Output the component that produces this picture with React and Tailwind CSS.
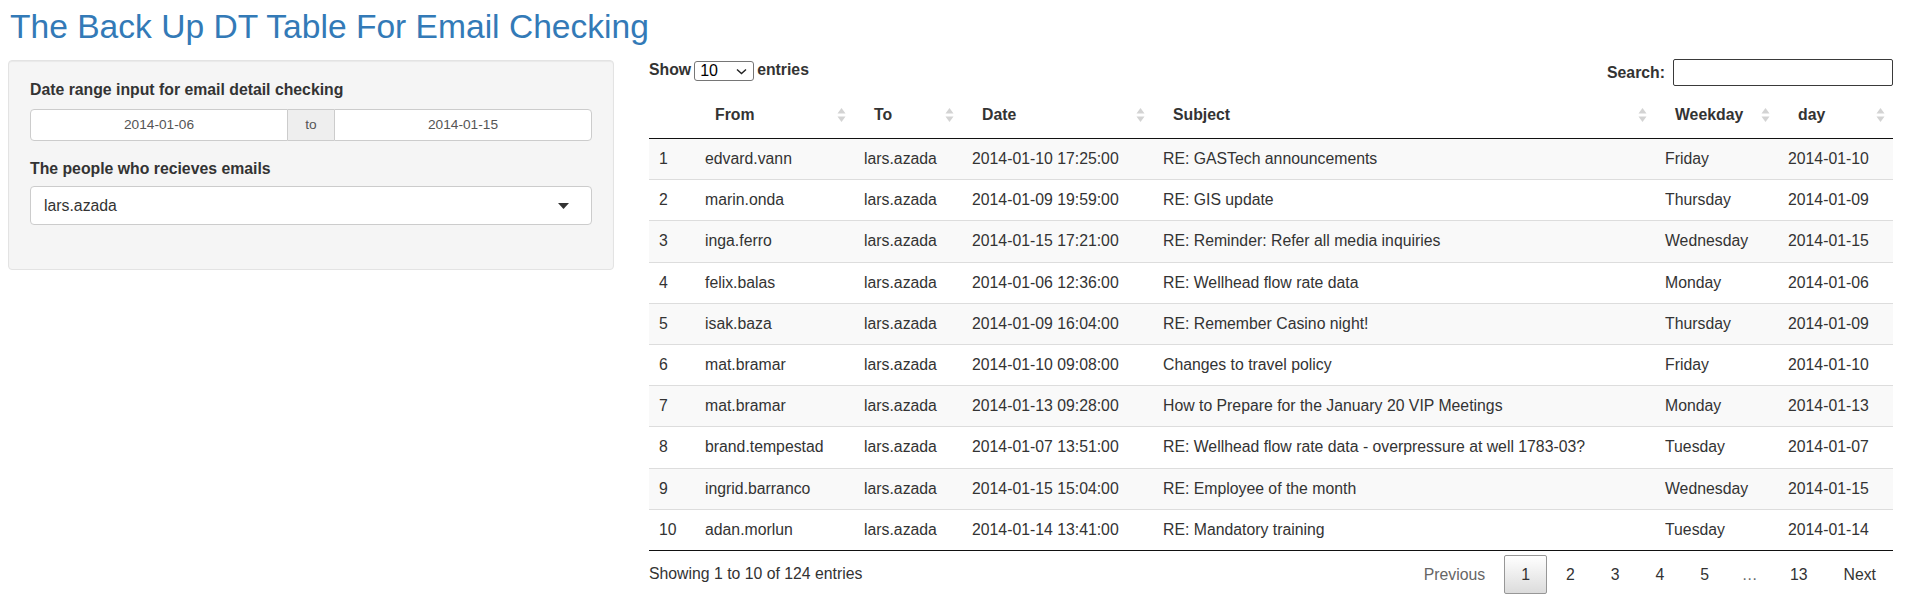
import React from 'react';

const rows = [
  ['1', 'edvard.vann', 'lars.azada', '2014-01-10 17:25:00', 'RE: GASTech announcements', 'Friday', '2014-01-10'],
  ['2', 'marin.onda', 'lars.azada', '2014-01-09 19:59:00', 'RE: GIS update', 'Thursday', '2014-01-09'],
  ['3', 'inga.ferro', 'lars.azada', '2014-01-15 17:21:00', 'RE: Reminder: Refer all media inquiries', 'Wednesday', '2014-01-15'],
  ['4', 'felix.balas', 'lars.azada', '2014-01-06 12:36:00', 'RE: Wellhead flow rate data', 'Monday', '2014-01-06'],
  ['5', 'isak.baza', 'lars.azada', '2014-01-09 16:04:00', 'RE: Remember Casino night!', 'Thursday', '2014-01-09'],
  ['6', 'mat.bramar', 'lars.azada', '2014-01-10 09:08:00', 'Changes to travel policy', 'Friday', '2014-01-10'],
  ['7', 'mat.bramar', 'lars.azada', '2014-01-13 09:28:00', 'How to Prepare for the January 20 VIP Meetings', 'Monday', '2014-01-13'],
  ['8', 'brand.tempestad', 'lars.azada', '2014-01-07 13:51:00', 'RE: Wellhead flow rate data - overpressure at well 1783-03?', 'Tuesday', '2014-01-07'],
  ['9', 'ingrid.barranco', 'lars.azada', '2014-01-15 15:04:00', 'RE: Employee of the month', 'Wednesday', '2014-01-15'],
  ['10', 'adan.morlun', 'lars.azada', '2014-01-14 13:41:00', 'RE: Mandatory training', 'Tuesday', '2014-01-14'],
];

const headers = ['From', 'To', 'Date', 'Subject', 'Weekday', 'day'];

const cols = 'grid grid-cols-[46px_159px_108px_191px_502px_123px_115px]';

function SortIcon() {
  return (
    <svg width="9" height="16" viewBox="0 0 9 16" className="shrink-0">
      <path d="M0.5 6.5 L4.5 1 L8.5 6.5 Z" fill="#d3d3d3" />
      <path d="M0.5 9.5 L4.5 15 L8.5 9.5 Z" fill="#d3d3d3" />
    </svg>
  );
}

export default function App() {
  return (
    <div className="w-full h-[610px] overflow-hidden bg-white text-[#333] font-['Liberation_Sans',Arial,sans-serif] text-[15.8px]">
      {/* Title */}
      <h2 className="pl-[10px] pt-[8px] text-[33.6px] leading-[37px] text-[#337ab7] font-normal">
        The Back Up DT Table For Email Checking
      </h2>

      <div className="flex mt-[14px]">
        {/* Sidebar */}
        <div className="ml-[8px] w-[606px] mt-[1px] shrink-0">
          <div className="bg-[#f5f5f5] border border-[#e3e3e3] rounded-[4px] shadow-[inset_0_1px_1px_rgba(0,0,0,0.05)] px-[21px] pt-[17px] pb-[44px]">
            <div className="font-bold leading-[23px] mb-[8px]">Date range input for email detail checking</div>
            <div className="flex h-[32px] text-[13.7px] text-[#555]">
              <div className="flex-1 flex items-center justify-center bg-white border border-[#ccc] rounded-l-[4px]">2014-01-06</div>
              <div className="w-[46px] flex items-center justify-center bg-[#eee] border-y border-[#ccc]">to</div>
              <div className="flex-1 flex items-center justify-center bg-white border border-[#ccc] rounded-r-[4px]">2014-01-15</div>
            </div>
            <div className="font-bold leading-[23px] mt-[16px] mb-[6px]">The people who recieves emails</div>
            <div className="h-[39px] bg-white border border-[#ccc] rounded-[4px] flex items-center justify-between pl-[13px] pr-[22px]">
              <span className="text-[#333]">lars.azada</span>
              <svg width="11" height="6" viewBox="0 0 11 6">
                <path d="M0 0 L11 0 L5.5 6 Z" fill="#333" />
              </svg>
            </div>
          </div>
        </div>

        {/* Main */}
        <div className="ml-[35px] w-[1244px] shrink-0">
          <div className="flex justify-between items-start h-[27px]">
            <div className="flex items-center leading-[22px] font-bold">
              <span>Show</span>
              <div className="mx-[3px] mt-[2px] w-[60px] h-[20px] border border-[#767676] rounded-[3px] bg-white flex items-center justify-between pl-[5px] pr-[6px] font-normal text-[16px] leading-[18px] text-black">
                <span>10</span>
                <svg width="11" height="7" viewBox="0 0 11 7">
                  <path d="M1 1.5 L5.5 5.5 L10 1.5" stroke="#222" strokeWidth="1.4" fill="none" />
                </svg>
              </div>
              <span>entries</span>
            </div>
            <div className="flex items-center h-[27px] font-bold">
              <span className="mr-[8px] mt-[1px]">Search:</span>
              <div className="w-[220px] h-[27px] border-[1.5px] border-[#3a3a3a] rounded-[2px] bg-white" />
            </div>
          </div>

          {/* Table */}
          <div className="mt-[10px]">
            <div className={`${cols} border-b border-[#111] font-bold`}>
              <div />
              {headers.map((h) => (
                <div key={h} className="flex items-center justify-between pl-[20px] pr-[8px] pt-[8px] pb-[12px] leading-[22px]">
                  <span>{h}</span>
                  <SortIcon />
                </div>
              ))}
            </div>
            <div className="border-b border-[#111]">
              {rows.map((r, i) => (
                <div
                  key={i}
                  className={`${cols} ${i % 2 === 0 ? 'bg-[#f9f9f9]' : 'bg-white'} ${i > 0 ? 'border-t border-[#ddd]' : ''}`}
                >
                  {r.map((c, j) => (
                    <div key={j} className="px-[10px] py-[9px] leading-[22.2px] whitespace-nowrap">
                      {c}
                    </div>
                  ))}
                </div>
              ))}
            </div>

            {/* Footer */}
            <div className="flex justify-between items-center mt-[4px] h-[39px]">
              <div className="leading-[22px] -mt-[2px]">Showing 1 to 10 of 124 entries</div>
              <div className="flex items-center">
                <span className="px-[16px] py-[8px] leading-[22px] border border-transparent text-[#666]">Previous</span>
                <span className="ml-[2px] px-[16px] py-[7px] leading-[23px] border border-[#979797] rounded-[2px] bg-gradient-to-b from-white to-[#dcdcdc]">1</span>
                <span className="ml-[2px] px-[16px] py-[8px] leading-[22px] border border-transparent">2</span>
                <span className="ml-[2px] px-[16px] py-[8px] leading-[22px] border border-transparent">3</span>
                <span className="ml-[2px] px-[16px] py-[8px] leading-[22px] border border-transparent">4</span>
                <span className="ml-[2px] px-[16px] py-[8px] leading-[22px] border border-transparent">5</span>
                <span className="ml-[2px] px-[13.5px] leading-[22px] text-[#666]">…</span>
                <span className="ml-[2px] px-[16px] py-[8px] leading-[22px] border border-transparent">13</span>
                <span className="ml-[2px] px-[16px] py-[8px] leading-[22px] border border-transparent">Next</span>
              </div>
            </div>
          </div>
        </div>
      </div>
    </div>
  );
}
